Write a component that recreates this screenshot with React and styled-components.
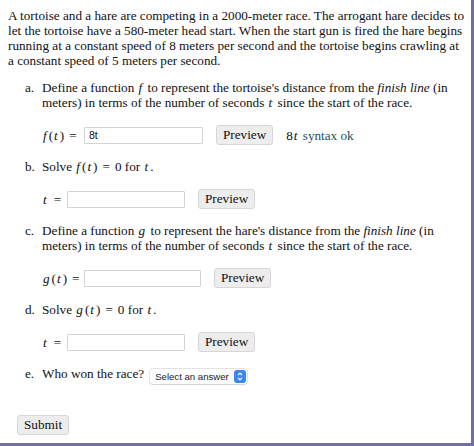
import React from "react";
import styled, { createGlobalStyle } from "styled-components";

const Global = createGlobalStyle`
  body {
    margin: 0;
    background: #fff;
    font-family: "Liberation Serif", "Times New Roman", serif;
    color: #111;
  }
`;

const Page = styled.div`
  box-sizing: border-box;
  width: 474px;
  height: 446px;
  padding: 8px 5px 0 8px;
  border-right: 3px solid #6f6ea9;
  border-bottom: 3px solid #6f6ea9;
  font-size: 13.2px;
  line-height: 15px;
`;

const Intro = styled.p`
  margin: 0 0 12px;
`;

const List = styled.div`
  display: flex;
  flex-direction: column;
  gap: 14px;
  padding-left: 17px;
`;

const Item = styled.div`
  display: grid;
  grid-template-columns: 17px 1fr;
`;

const Marker = styled.span``;

const Body = styled.div`
  padding-right: 4px;
`;

// math letters, italic serif like the rendered TeX
const M = styled.i`
  font-family: "Liberation Serif", "Times New Roman", serif;
  font-style: italic;
  padding: 0 2px 0 1px;
`;

const Eq = styled.span`
  margin: 0 5px;
`;

const Row = styled.div`
  display: flex;
  align-items: center;
  height: 20px;
  margin-top: 15px;
`;

const Label = styled.span`
  width: ${(p) => p.w}px;
  flex: none;
  white-space: nowrap;
`;

const Field = styled.input`
  box-sizing: border-box;
  width: ${(p) => p.w || 119}px;
  height: 17px;
  border: 1px solid #d4d4d4;
  border-radius: 1px;
  padding: 0 4px;
  font-family: "Liberation Sans", Arial, sans-serif;
  font-size: 10.5px;
  color: #111;
  background: #fff;
  outline: none;
`;

const Button = styled.button`
  box-sizing: border-box;
  height: 20px;
  margin-left: 13px;
  padding: 0 6px;
  border: 1px solid #d6d6d6;
  border-radius: 3px;
  background: #ededed;
  font-family: "Liberation Serif", "Times New Roman", serif;
  font-size: 13.2px;
  color: #111;
`;

const Feedback = styled.span`
  margin-left: 13px;
  color: #1d4f55;
  font-family: "Liberation Serif", "Times New Roman", serif;
`;

const Plain = styled.span`
  color: #111;
`;

const Select = styled.span`
  display: inline-flex;
  align-items: center;
  justify-content: space-between;
  box-sizing: border-box;
  width: 97px;
  height: 15px;
  margin-left: 6px;
  padding: 0 1px 0 5px;
  vertical-align: -2px;
  background: #fff;
  border-radius: 3px;
  box-shadow: 0 0 0 0.5px #c8c8c8, 0 1px 1px rgba(0, 0, 0, 0.12);
  font-family: "Liberation Sans", Arial, sans-serif;
  font-size: 9.6px;
  line-height: 15px;
  color: #222;
`;

const Knob = styled.span`
  display: flex;
  align-items: center;
  justify-content: center;
  width: 12px;
  height: 13px;
  border-radius: 3px;
  background: #3d86f2;
`;

const SubmitWrap = styled.div`
  margin-top: 31px;
  padding-left: 9px;
`;

const Submit = styled(Button)`
  margin-left: 0;
  width: 52px;
`;

const Question = ({ letter, children }) => (
  <Item>
    <Marker>{letter}.</Marker>
    <Body>{children}</Body>
  </Item>
);

export default function App() {
  return (
    <>
      <Global />
      <Page>
        <Intro>
          A tortoise and a hare are competing in a 2000-meter race. The arrogant hare decides to
          let the tortoise have a 580-meter head start. When the start gun is fired the hare
          begins running at a constant speed of 8 meters per second and the tortoise begins
          crawling at a constant speed of 5 meters per second.
        </Intro>
        <List>
          <Question letter="a">
            Define a function <M>f</M> to represent the tortoise's distance from the{" "}
            <i>finish line</i> (in meters) in terms of the number of seconds <M>t</M> since the
            start of the race.
            <Row>
              <Label w={42}>
                <M>f</M>(<M>t</M>)<Eq>=</Eq>
              </Label>
              <Field defaultValue="8t" />
              <Button>Preview</Button>
              <Feedback>
                <Plain>
                  8<M>t</M>
                </Plain>{" "}
                syntax ok
              </Feedback>
            </Row>
          </Question>
          <Question letter="b">
            Solve <M>f</M>(<M>t</M>)<Eq>=</Eq>0 for <M>t</M>.
            <Row>
              <Label w={25}>
                <M>t</M>
                <Eq>=</Eq>
              </Label>
              <Field w={118} />
              <Button>Preview</Button>
            </Row>
          </Question>
          <Question letter="c">
            Define a function <M>g</M> to represent the hare's distance from the <i>finish line</i>{" "}
            (in meters) in terms of the number of seconds <M>t</M> since the start of the race.
            <Row>
              <Label w={42}>
                <M>g</M>(<M>t</M>)<Eq>=</Eq>
              </Label>
              <Field w={117} />
              <Button>Preview</Button>
            </Row>
          </Question>
          <Question letter="d">
            Solve <M>g</M>(<M>t</M>)<Eq>=</Eq>0 for <M>t</M>.
            <Row>
              <Label w={25}>
                <M>t</M>
                <Eq>=</Eq>
              </Label>
              <Field w={118} />
              <Button>Preview</Button>
            </Row>
          </Question>
          <Question letter="e">
            Who won the race?
            <Select>
              Select an answer
              <Knob>
                <svg width="6" height="9" viewBox="0 0 6 9" fill="none">
                  <path d="M1 3.2 L3 1.2 L5 3.2 M1 5.8 L3 7.8 L5 5.8" stroke="#fff" strokeWidth="1.2" />
                </svg>
              </Knob>
            </Select>
          </Question>
        </List>
        <SubmitWrap>
          <Submit>Submit</Submit>
        </SubmitWrap>
      </Page>
    </>
  );
}
